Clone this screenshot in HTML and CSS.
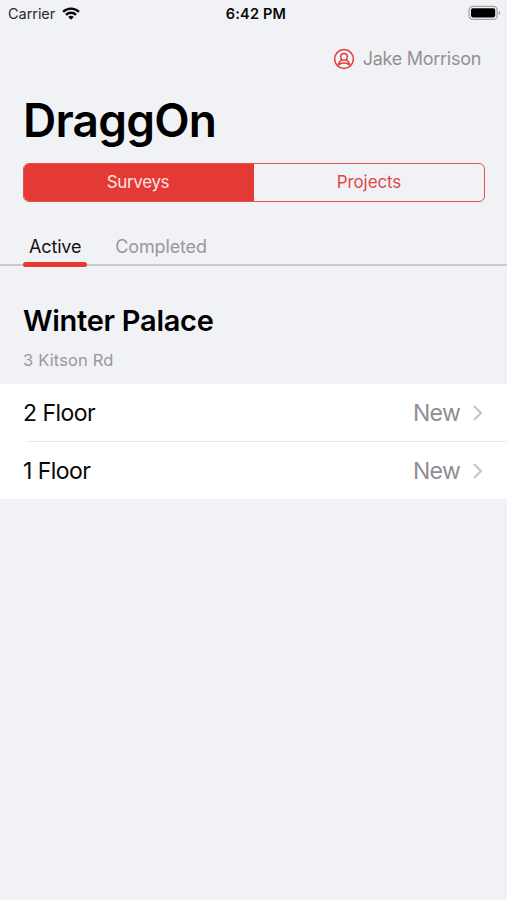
FILE: index.html
```html
<!DOCTYPE html>
<html lang="en">
<head>
<meta charset="utf-8">
<title>DraggOn</title>
<link rel="stylesheet" href="styles.css">
</head>
<body>
<div class="status">
  <div class="carrier"><span>Carrier</span>
    <svg class="wifi" width="18" height="13" viewBox="0 0 18 13" fill="none" stroke="#080808" stroke-width="2.4"><path d="M1.1 4.8C5.3.5 12.7.5 16.9 4.8"/><path d="M4 7.8C6.7 5.1 11.3 5.1 14 7.8"/><path d="M9 12.7 6.2 9.9C7.7 8.5 10.3 8.5 11.8 9.9Z" fill="#080808" stroke="none"/></svg>
  </div>
  <time class="time">6:42 PM</time>
  <svg class="battery" width="34" height="16" viewBox="0 0 34 16"><rect x="1.1" y="1.3" width="28" height="13" rx="3.6" fill="#f4f4f6" stroke="#a3a3a5" stroke-width="1.3"/><rect x="3" y="3.2" width="24.2" height="9.2" rx="1.8" fill="#000"/><path d="M30.8 5.7c1.8.8 1.8 3.4 0 4.2z" fill="#8e8e92"/></svg>
</div>
<header class="user">
  <svg width="22" height="22" viewBox="0 0 22 22" fill="none" stroke="#e2403e" stroke-width="1.5"><circle cx="11" cy="11" r="9.4"/><circle cx="11" cy="8.9" r="3.3"/><path d="M5.4 17.8c.3-3.6 1.9-5.2 3.9-6M16.6 17.8c-.3-3.6-1.9-5.2-3.9-6M6.2 16.4c2.8-1.6 6.8-1.6 9.6 0"/></svg>
  <span class="user-name">Jake Morrison</span>
</header>
<h1 class="title"><span>DraggOn</span></h1>
<div class="segments">
  <div class="segment selected"><span>Surveys</span></div>
  <div class="segment"><span>Projects</span></div>
</div>
<nav class="tabs">
  <div class="tab active"><span>Active</span></div>
  <div class="tab"><span>Completed</span></div>
</nav>
<section>
  <h2 class="place"><span>Winter Palace</span></h2>
  <p class="address"><span>3 Kitson Rd</span></p>
  <div class="list">
    <div class="row"><span class="floor">2 Floor</span><span class="state">New</span><svg class="chevron" width="12" height="18" viewBox="0 0 12 18" fill="none" stroke="#c3c3c6" stroke-width="2"><path d="M2 2l7 7-7 7"/></svg></div>
    <div class="row"><span class="floor">1 Floor</span><span class="state">New</span><svg class="chevron" width="12" height="18" viewBox="0 0 12 18" fill="none" stroke="#c3c3c6" stroke-width="2"><path d="M2 2l7 7-7 7"/></svg></div>
  </div>
</section>
</body>
</html>
```
FILE: styles.css
```css
* { box-sizing: border-box; margin: 0; padding: 0; }
body { background: #f1f2f6; font-family: Inter, sans-serif; color: #080808; min-height: 900px; overflow: hidden; }
svg { display: block; flex: none; }
.status { display: grid; grid-template-columns: 1fr auto 1fr; align-items: center; height: 26px; padding: 0 5px 0 8px; }
.carrier { display: flex; align-items: center; gap: 7px; font-size: 14.5px; letter-spacing: -.05px; color: #2a2a2c; }
.time { font-size: 14.5px; font-weight: 600; letter-spacing: .2px; padding-left: 2px; }
.battery { justify-self: end; }
.user { display: flex; align-items: center; justify-content: flex-end; gap: 8px; height: 64px; padding: 1px 26px 0 0; }
.user-name { font-size: 18px; line-height: 22px; letter-spacing: -.28px; color: #919195; }
.title { height: 73px; padding-left: 23px; font-size: 46px; line-height: 60px; font-weight: 600; letter-spacing: -.75px; color: #000; }
.segments { display: flex; height: 39px; margin: 0 22px 0 23px; border: 1.5px solid #e2504f; border-radius: 6px; overflow: hidden; }
.segment { flex: 0 0 50%; display: flex; align-items: center; justify-content: center; padding-bottom: 1px; font-size: 17px; letter-spacing: -.1px; color: #df4846; }
.selected { padding-right: 2px; background: #e53935; color: #fbe3e3; letter-spacing: -.35px; }
.tabs { display: flex; height: 64px; padding: 27px 0 0 23px; gap: 22px; border-bottom: 2px solid #c9cace; }
.tab { position: relative; padding: 0 6px; font-size: 18px; line-height: 35px; letter-spacing: -.15px; color: #98989d; }
.active { color: #111; }
.active::after { content: ""; position: absolute; left: 0; right: 0; bottom: -3px; height: 5px; border-radius: 3px; background: #e53935; }
.place { padding: 35px 0 0 23px; font-size: 29px; line-height: 40px; font-weight: 600; letter-spacing: -.28px; color: #000; }
.address { height: 43px; padding: 8px 0 0 23px; font-size: 16.5px; line-height: 22px; letter-spacing: .15px; color: #98989d; }
.list { background: #fff; }
.row { display: flex; align-items: center; height: 57px; padding: 0 23px 0 23px; font-size: 23px; letter-spacing: -.55px; }
.row:first-child { height: 58px; background: linear-gradient(#e9e9ec, #e9e9ec) 26px 100% / 100% 1.5px no-repeat; }
.floor { flex: 1; }
.state { color: #8e8e92; margin-right: 12px; letter-spacing: -.7px; }
```
